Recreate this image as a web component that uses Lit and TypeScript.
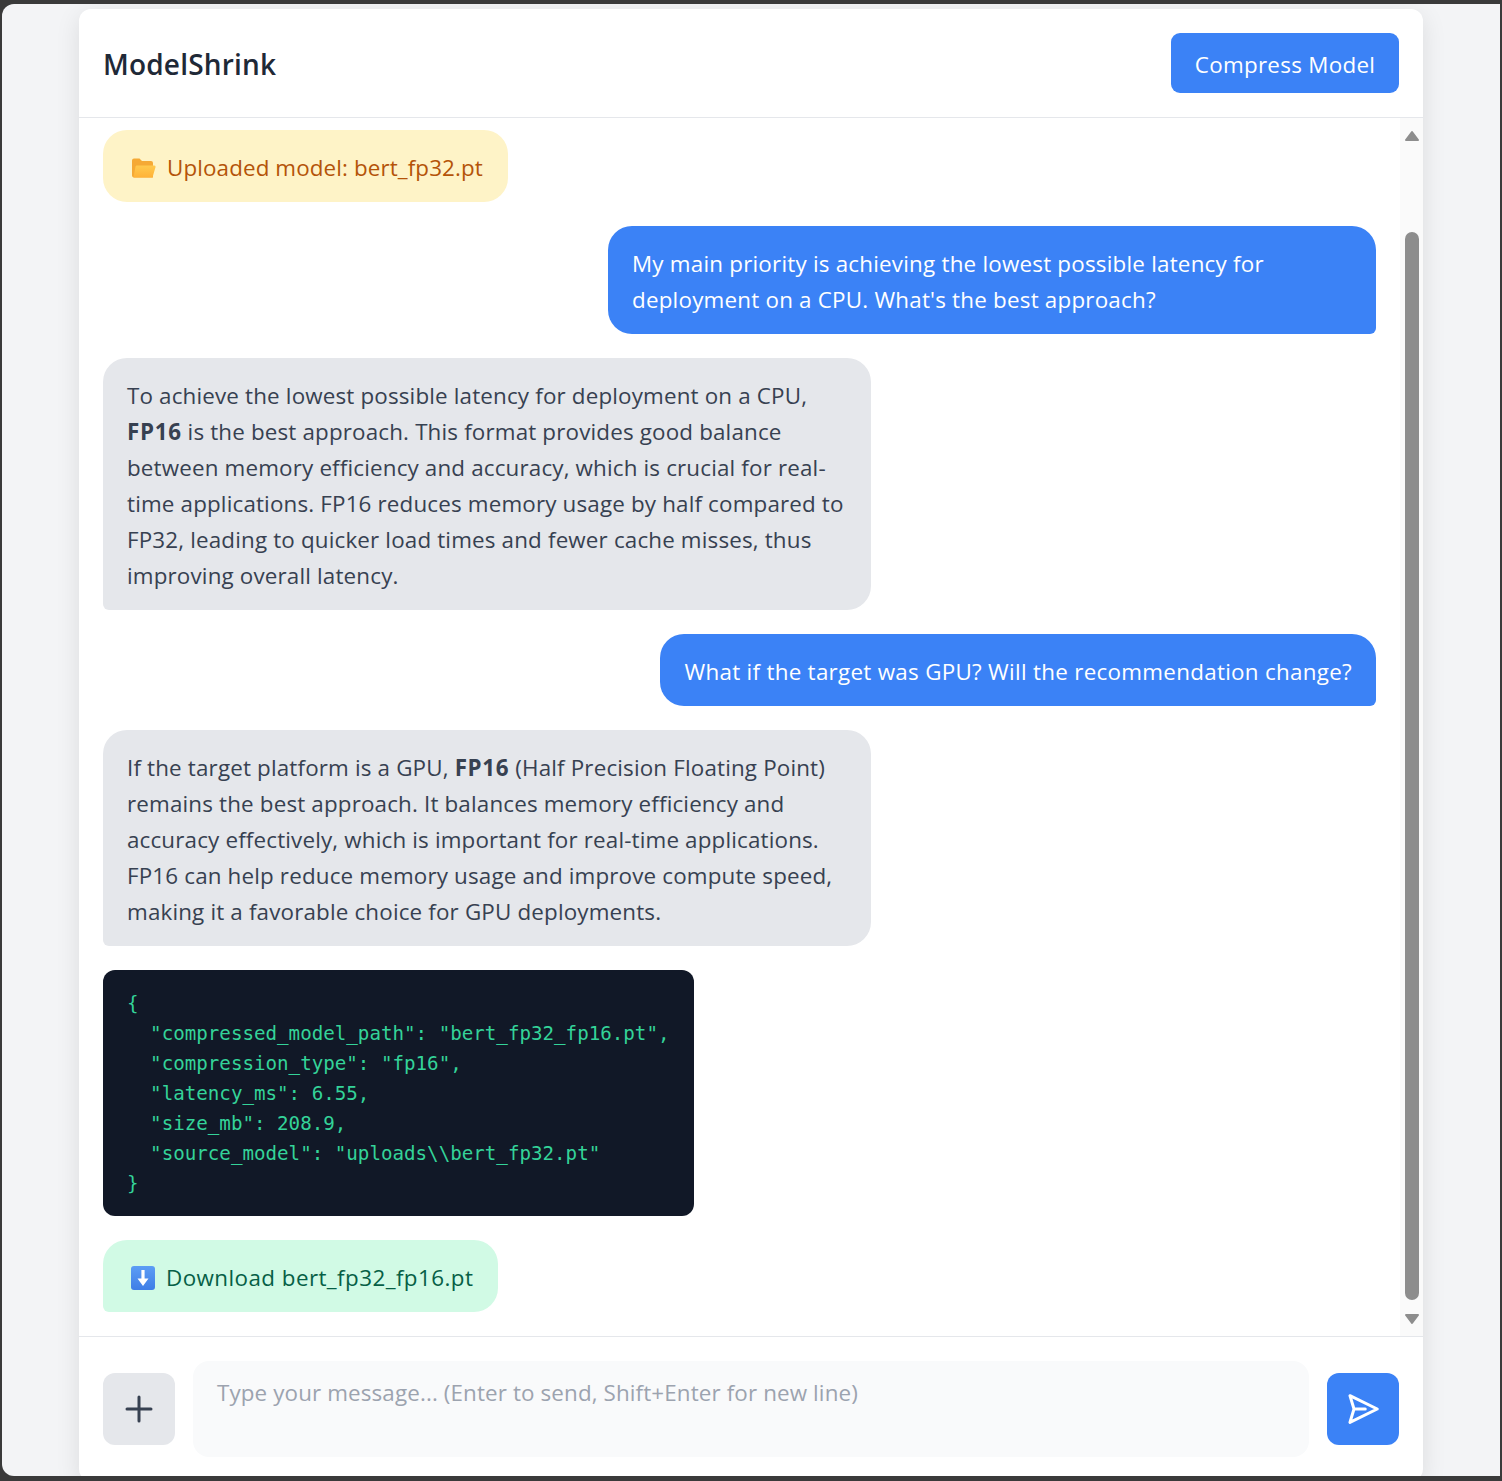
import { LitElement, html, css } from "lit";
import { customElement } from "lit/decorators.js";

@customElement("app-root")
export class AppRoot extends LitElement {
  static styles = css`
    :host {
      display: block;
      height: 1481px;
      box-sizing: border-box;
      padding: 4px 2px 5px;
      background: #3a3a3a;
      font-family: "Open Sans", "Noto Sans", sans-serif;
      font-size: 22.4px;
      overflow: hidden;
    }
    .window {
      height: 100%;
      display: flex;
      justify-content: center;
      padding-top: 5px;
      box-sizing: border-box;
      background: #f3f4f6;
      border-radius: 12px 0 0 12px;
      overflow: hidden;
    }
    .card {
      width: 1344px;
      height: 1472px;
      flex-shrink: 0;
      display: flex;
      flex-direction: column;
      background: #fff;
      border-radius: 12px;
      box-shadow: 0 6px 24px rgba(0, 0, 0, 0.1);
    }
    header {
      height: 109px;
      flex-shrink: 0;
      box-sizing: border-box;
      padding: 0 24px;
      display: flex;
      align-items: center;
      justify-content: space-between;
      border-bottom: 1px solid #e5e7eb;
    }
    h1 {
      margin: 2px 0 0;
      font-size: 28px;
      font-weight: 600;
      letter-spacing: 0.18px;
      color: #1f2937;
    }
    .compress {
      width: 228px;
      height: 60px;
      border: none;
      border-radius: 9px;
      padding: 2px 0 0;
      background: #3b82f6;
      color: #fff;
      font: inherit;
      letter-spacing: 0.29px;
    }
    .middle {
      flex: 1;
      min-height: 0;
      display: flex;
    }
    .messages {
      flex: 1;
      padding: 12px 24px;
      display: flex;
      flex-direction: column;
      align-items: flex-start;
      gap: 24px;
    }
    .msg {
      padding: 20px 24px 16px;
      line-height: 36px;
      border-radius: 24px;
      white-space: nowrap;
      box-sizing: border-box;
    }
    .user {
      align-self: flex-end;
      background: #3b82f6;
      color: #fff;
      letter-spacing: 0.285px;
      border-bottom-right-radius: 6px;
    }
    .wide {
      width: 768px;
      letter-spacing: 0.21px;
    }
    .bot {
      width: 768px;
      background: #e5e7eb;
      color: #374151;
      letter-spacing: 0.16px;
      border-bottom-left-radius: 6px;
    }
    .bot b {
      font-weight: 700;
      letter-spacing: 0.66px;
    }
    .file {
      display: flex;
      align-items: center;
      gap: 11px;
      padding-left: 28px;
    }
    .upload {
      width: 405px;
      background: #fef3c7;
      color: #b45309;
      letter-spacing: 0.11px;
    }
    .download {
      width: 395px;
      background: #d1fae5;
      color: #065f46;
      font-weight: 500;
      letter-spacing: 0.43px;
      border-bottom-left-radius: 6px;
    }
    .code {
      margin: 0;
      width: 591px;
      box-sizing: border-box;
      padding: 19px 0 17px 24px;
      background: #111827;
      color: #34d399;
      border-radius: 12px;
      font-family: "DejaVu Sans Mono", "Liberation Mono", monospace;
      font-size: 19.18px;
      line-height: 30px;
    }
    .scroll {
      width: 23px;
      flex-shrink: 0;
      display: flex;
      flex-direction: column;
      align-items: center;
      background: #fafafa;
      padding: 12px 0 11px;
      box-sizing: border-box;
    }
    .scroll svg {
      display: block;
    }
    .thumb {
      flex: 1;
      width: 14px;
      margin: 90px 0 13px;
      border-radius: 7px;
      background: #8d8d8d;
    }
    footer {
      flex-shrink: 0;
      height: 145px;
      box-sizing: border-box;
      padding: 24px;
      display: flex;
      align-items: center;
      gap: 18px;
      border-top: 1px solid #e5e7eb;
    }
    .square {
      width: 72px;
      height: 72px;
      flex-shrink: 0;
      border: none;
      padding: 0;
      border-radius: 12px;
      display: flex;
      align-items: center;
      justify-content: center;
    }
    .plus {
      background: #e5e7eb;
      color: #374151;
    }
    .send {
      background: #3b82f6;
      color: #fff;
    }
    .input {
      flex: 1;
      height: 96px;
      box-sizing: border-box;
      padding: 14px 24px;
      line-height: 36px;
      border-radius: 16px;
      background: #f9fafb;
      color: #9ca3af;
      letter-spacing: 0.12px;
    }
  `;

  render() {
    return html`
      <div class="window">
        <div class="card">
          <header>
            <h1>ModelShrink</h1>
            <button class="compress">Compress Model</button>
          </header>
          <div class="middle">
            <div class="messages">
              <div class="msg file upload">${this.folderIcon()}Uploaded model: bert_fp32.pt</div>
              <div class="msg user wide">
                My main priority is achieving the lowest possible latency for<br />deployment on a CPU. What's the best approach?
              </div>
              <div class="msg bot">
                To achieve the lowest possible latency for deployment on a CPU,<br />
                <b>FP16</b> is the best approach. This format provides good balance<br />
                between memory efficiency and accuracy, which is crucial for real-<br />
                time applications. FP16 reduces memory usage by half compared to<br />
                FP32, leading to quicker load times and fewer cache misses, thus<br />
                improving overall latency.
              </div>
              <div class="msg user">What if the target was GPU? Will the recommendation change?</div>
              <div class="msg bot">
                If the target platform is a GPU, <b>FP16</b> (Half Precision Floating Point)<br />
                remains the best approach. It balances memory efficiency and<br />
                accuracy effectively, which is important for real-time applications.<br />
                FP16 can help reduce memory usage and improve compute speed,<br />
                making it a favorable choice for GPU deployments.
              </div>
              <pre class="code">{
  "compressed_model_path": "bert_fp32_fp16.pt",
  "compression_type": "fp16",
  "latency_ms": 6.55,
  "size_mb": 208.9,
  "source_model": "uploads\\\\bert_fp32.pt"
}</pre>
              <div class="msg file download">${this.downloadIcon()}Download bert_fp32_fp16.pt</div>
            </div>
            <div class="scroll">
              <svg width="16" height="12" viewBox="0 0 16 12"><path d="M8 2 14 10H2Z" fill="#8d8d8d" stroke="#8d8d8d" stroke-width="2" stroke-linejoin="round" /></svg>
              <div class="thumb"></div>
              <svg width="16" height="12" viewBox="0 0 16 12"><path d="M2 2H14L8 10Z" fill="#8d8d8d" stroke="#8d8d8d" stroke-width="2" stroke-linejoin="round" /></svg>
            </div>
          </div>
          <footer>
            <button class="square plus">
              <svg width="36" height="36" viewBox="0 0 24 24" fill="none" stroke="currentColor" stroke-width="2" stroke-linecap="round">
                <path d="M12 4v16m8-8H4" />
              </svg>
            </button>
            <div class="input">Type your message... (Enter to send, Shift+Enter for new line)</div>
            <button class="square send">
              <svg width="36" height="36" viewBox="0 0 24 24" fill="none" stroke="currentColor" stroke-width="2" stroke-linecap="round" stroke-linejoin="round">
                <path d="M6 12 3.3 3.1 21.5 12 3.3 20.9 6 12Zm0 0h7.5" />
              </svg>
            </button>
          </footer>
        </div>
      </div>
    `;
  }

  folderIcon() {
    return html`<svg width="25" height="22" viewBox="0 0 25 22">
      <defs>
        <linearGradient id="fold" x1="0" y1="0" x2="0" y2="1">
          <stop offset="0" stop-color="#ffc94d" />
          <stop offset="1" stop-color="#ffb238" />
        </linearGradient>
      </defs>
      <path d="M1 3.5A2 2 0 0 1 3 1.5H8.5L11 4H20A2 2 0 0 1 22 6V20.5H3A2 2 0 0 1 1 18.5Z" fill="#f5a935" />
      <path d="M6 8.5H23A1.5 1.5 0 0 1 24.4 10.5L21.5 20.5H2.5L4.5 9.6A1.5 1.5 0 0 1 6 8.5Z" fill="url(#fold)" />
    </svg>`;
  }

  downloadIcon() {
    return html`<svg width="24" height="24" viewBox="0 0 24 24">
      <defs>
        <linearGradient id="dl" x1="0" y1="0" x2="0" y2="1">
          <stop offset="0" stop-color="#5c9df5" />
          <stop offset="1" stop-color="#3f7ee6" />
        </linearGradient>
      </defs>
      <rect width="24" height="24" rx="3" fill="url(#dl)" />
      <path d="M10.4 4H13.6V12.5H17.5L12 20 6.5 12.5H10.4Z" fill="#fff" />
    </svg>`;
  }
}
